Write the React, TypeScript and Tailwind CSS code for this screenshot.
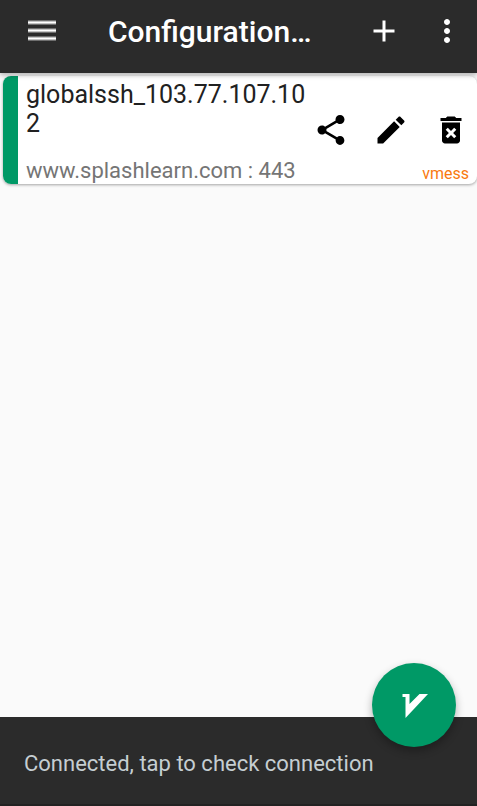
import React from "react";

type IconProps = { d: string; className?: string };

function Icon({ d, className = "" }: IconProps) {
  return (
    <svg viewBox="0 0 24 24" className={`size-9 ${className}`} fill="currentColor" aria-hidden="true">
      <path d={d} />
    </svg>
  );
}

const icons = {
  add: "M19 13h-6v6h-2v-6H5v-2h6V5h2v6h6z",
  more: "M12 8c1.1 0 2-.9 2-2s-.9-2-2-2-2 .9-2 2 .9 2 2 2zm0 2c-1.1 0-2 .9-2 2s.9 2 2 2 2-.9 2-2-.9-2-2-2zm0 6c-1.1 0-2 .9-2 2s.9 2 2 2 2-.9 2-2-.9-2-2-2z",
  share:
    "M18 16.08c-.76 0-1.44.3-1.96.77L8.91 12.7c.05-.23.09-.46.09-.7s-.04-.47-.09-.7l7.05-4.11c.54.5 1.25.81 2.04.81 1.66 0 3-1.34 3-3s-1.34-3-3-3-3 1.34-3 3c0 .24.04.47.09.7L8.04 9.81C7.5 9.31 6.79 9 6 9c-1.66 0-3 1.34-3 3s1.34 3 3 3c.79 0 1.5-.31 2.04-.81l7.12 4.16c-.05.21-.08.43-.08.65 0 1.61 1.31 2.92 2.92 2.92s2.92-1.31 2.92-2.92-1.31-2.92-2.92-2.92z",
  edit: "M3 17.25V21h3.75L17.81 9.94l-3.75-3.75L3 17.25zM20.71 7.04c.39-.39.39-1.02 0-1.41l-2.34-2.34c-.39-.39-1.02-.39-1.41 0l-1.83 1.83 3.75 3.75 1.83-1.83z",
  remove:
    "M6 19c0 1.1.9 2 2 2h8c1.1 0 2-.9 2-2V7H6v12zm2.46-7.12l1.41-1.41L12 12.59l2.12-2.12 1.41 1.41L13.41 14l2.12 2.12-1.41 1.41L12 15.41l-2.12 2.12-1.41-1.41L10.59 14l-2.13-2.12zM15.5 4l-1-1h-5l-1 1H5v2h14V4z",
};

const menuLines = "M0 3.5h28M0 11.5h28M0 19.5h28";

function TopBar() {
  return (
    <header className="z-10 flex h-[73px] items-start bg-[#2b2b2b] pt-3 pr-3 pl-7 text-white shadow-[0_2px_5px_rgba(0,0,0,0.3)]">
      <button aria-label="Open menu" className="flex h-9 items-center">
        <svg viewBox="0 0 28 22" className="h-[22px] w-7" aria-hidden="true">
          <path d={menuLines} stroke="#6e6e6e" strokeWidth="5" />
          <path d={menuLines} stroke="#c4c4c4" strokeWidth="3" />
          <path d={menuLines} stroke="#ffffff" strokeWidth="1" />
        </svg>
      </button>
      <h1 className="ml-[52px] min-w-0 flex-1 truncate text-[30px] leading-10 font-medium">Configuration…</h1>
      <button aria-label="Add configuration" className="mt-px">
        <Icon d={icons.add} />
      </button>
      <button aria-label="More options" className="mt-px ml-[27px]">
        <Icon d={icons.more} />
      </button>
    </header>
  );
}

function ConfigCard() {
  return (
    <article className="mt-[3px] ml-[3px] flex overflow-hidden rounded-lg bg-white shadow-[0_1px_3px_rgba(0,0,0,0.35)]">
      <div className="w-[15px] shrink-0 bg-[#009966]" />
      <div className="min-w-0 flex-1 px-2 pt-1">
        <div className="flex">
          <h2 className="h-[76px] min-w-0 flex-1 text-[25px] leading-[29px] break-all text-[#212121]">
            globalssh_103.77.107.102
          </h2>
          <div className="mt-8 ml-[3px] flex h-9 gap-6 text-black">
            <button aria-label="Share">
              <Icon d={icons.share} />
            </button>
            <button aria-label="Edit">
              <Icon d={icons.edit} />
            </button>
            <button aria-label="Delete">
              <Icon d={icons.remove} />
            </button>
          </div>
        </div>
        <div className="flex h-7 items-end justify-between">
          <p className="text-[22px] leading-[26px] text-[#757575]">www.splashlearn.com : 443</p>
          <p className="text-base leading-5 text-[#f97910]">vmess</p>
        </div>
      </div>
    </article>
  );
}

export default function App() {
  return (
    <div className="flex min-h-screen flex-col bg-[#fafafa] font-['Roboto',sans-serif]">
      <TopBar />
      <main className="flex-1">
        <ConfigCard />
      </main>
      <footer className="relative h-[89px] border-b-2 border-[#222222] bg-[#2b2b2b]">
        <button className="flex h-full w-full items-center px-6 pt-[6px] text-left text-[22px] text-[#c5ced2]">
          Connected, tap to check connection
        </button>
        <button
          aria-label="Toggle connection"
          className="absolute -top-[54px] right-[21px] flex size-[84px] items-center justify-center rounded-full bg-[#009966] text-white shadow-[0_4px_9px_rgba(0,0,0,0.3)]"
        >
          <svg viewBox="0 0 36 36" className="size-9" fill="currentColor" aria-hidden="true">
            <path d="M6.5 7h7v10L23.500 7H32L9.500 31V10h-3z" />
          </svg>
        </button>
      </footer>
    </div>
  );
}
